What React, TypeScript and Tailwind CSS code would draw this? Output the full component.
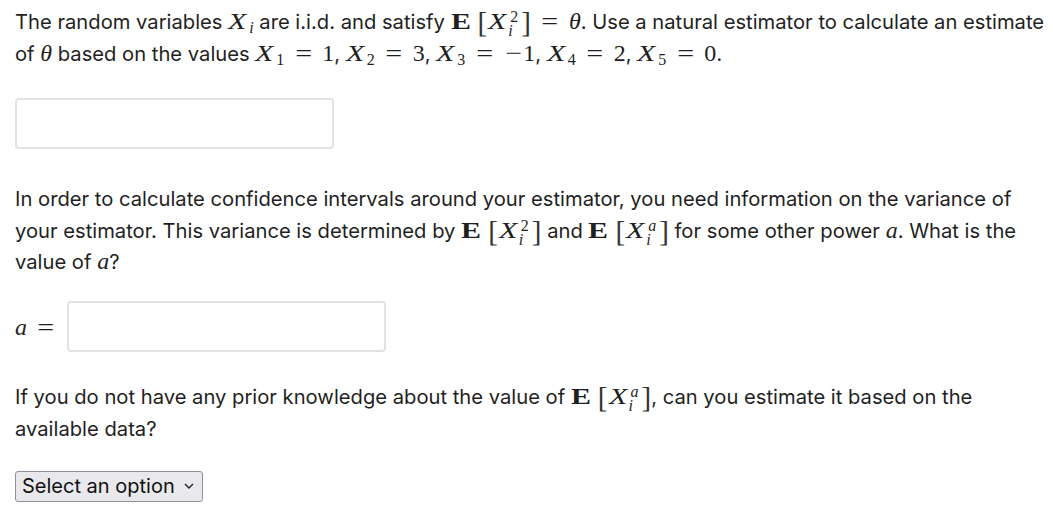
import React from 'react';

const mathFont = "font-['Liberation_Serif','DejaVu_Serif',serif]";

function V({ children }: { children: React.ReactNode }) {
  return <span className={`${mathFont} italic text-[24px] leading-none`}>{children}</span>;
}

function R({ children }: { children: React.ReactNode }) {
  return <span className={`${mathFont} text-[24px] leading-none`}>{children}</span>;
}

function Op({ children }: { children: React.ReactNode }) {
  return (
    <span className={`${mathFont} inline-block w-[20px] text-center text-[24px] leading-none mx-[9px]`}>
      <span className="inline-block scale-x-125">{children}</span>
    </span>
  );
}

function Minus() {
  return (
    <span className={`${mathFont} inline-block w-[20px] text-center text-[24px] leading-none`}>
      <span className="inline-block scale-x-125">−</span>
    </span>
  );
}

// wide italic X, closer to the TeX glyph
function BigX() {
  return (
    <span className={`${mathFont} italic text-[24px] leading-none inline-block w-[21px]`}>
      <span className="inline-block origin-left scale-x-125">X</span>
    </span>
  );
}

// X with stacked super/subscript
function XSS({ sup, sub }: { sup?: string; sub?: string }) {
  return (
    <span className="inline-flex items-baseline">
      <BigX />
      <span className="relative inline-block w-[11px] h-[1px]">
        {sup && (
          <span className={`absolute left-[1px] top-[-19px] ${mathFont} text-[16px] leading-none ${sup === 'a' ? 'italic' : ''}`}>
            {sup}
          </span>
        )}
        {sub && (
          <span className={`absolute left-[-1px] top-[-5px] ${mathFont} italic text-[16px] leading-none`}>{sub}</span>
        )}
      </span>
    </span>
  );
}

function XSub({ n, it }: { n: string; it?: boolean }) {
  return (
    <span className="inline-flex items-baseline">
      <BigX />
      <span className={`${mathFont} ${it ? 'italic' : ''} text-[16px] leading-none relative top-[4px]`}>{n}</span>
    </span>
  );
}

function Expect({ sup }: { sup: string }) {
  return (
    <span className="inline-flex items-baseline">
      <span className={`${mathFont} font-bold text-[24px] leading-none inline-block w-[21px]`}>
        <span className="inline-block origin-left scale-x-125">E</span>
      </span>
      <span className={`${mathFont} text-[29px] leading-none ml-[6px] mr-[1px] font-light text-[#333] relative top-[3px]`}>[</span>
      <XSS sup={sup} sub="i" />
      <span className={`${mathFont} text-[29px] leading-none ml-[1px] font-light text-[#333] relative top-[3px]`}>]</span>
    </span>
  );
}

export default function App() {
  return (
    <div className="min-h-screen bg-white pl-[15px] pr-2 pt-[5px] font-['Inter','Noto_Sans',sans-serif] text-[20.2px] text-[#1f1f1f] leading-[32px]">
      <p>
        The random variables <XSub n="i" it /> are i.i.d. and satisfy <Expect sup="2" /><Op>=</Op>
        <V>θ</V>. Use a natural estimator to calculate an estimate of <V>θ</V> based on the values{' '}
        <XSub n="1" /><Op>=</Op><R>1</R>, <XSub n="2" /><Op>=</Op><R>3</R>, <XSub n="3" /><Op>=</Op>
        <Minus /><R>1</R>, <XSub n="4" /><Op>=</Op><R>2</R>, <XSub n="5" /><Op>=</Op><R>0.</R>
      </p>

      <div className="mt-[28px]">
        <input
          type="text"
          className="block w-[319px] h-[51px] rounded-[4px] border-2 border-[#e2e2e2] bg-white outline-none"
        />
      </div>

      <p className="mt-[34px] leading-[31px]">
        In order to calculate confidence intervals around your estimator, you need information on the
        variance of your estimator. This variance is determined by <Expect sup="2" /> and{' '}
        <Expect sup="a" /> for some other power <V>a</V>. What is the value of <V>a</V>?
      </p>

      <div className="mt-[24px] flex items-center">
        <span className="w-[52px] flex items-baseline">
          <V>a</V>
          <Op>=</Op>
        </span>
        <input
          type="text"
          className="block w-[319px] h-[51px] rounded-[4px] border-2 border-[#e2e2e2] bg-white outline-none"
        />
      </div>

      <p className="mt-[28px]">
        If you do not have any prior knowledge about the value of <Expect sup="a" />, can you estimate it
        based on the available data?
      </p>

      <div className="mt-[25px]">
        <div className="inline-flex items-center h-[31px] w-[188px] rounded-[3px] border border-[#8f8f9d] bg-[#e9e9ed] pl-[6px] pr-[8px] text-[20px] text-[#111] leading-none">
          <span className="flex-1">Select an option</span>
          <svg width="10" height="6" viewBox="0 0 10 6" className="ml-1">
            <path d="M1 1l4 4 4-4" fill="none" stroke="#222" strokeWidth="1.4" />
          </svg>
        </div>
      </div>
    </div>
  );
}
